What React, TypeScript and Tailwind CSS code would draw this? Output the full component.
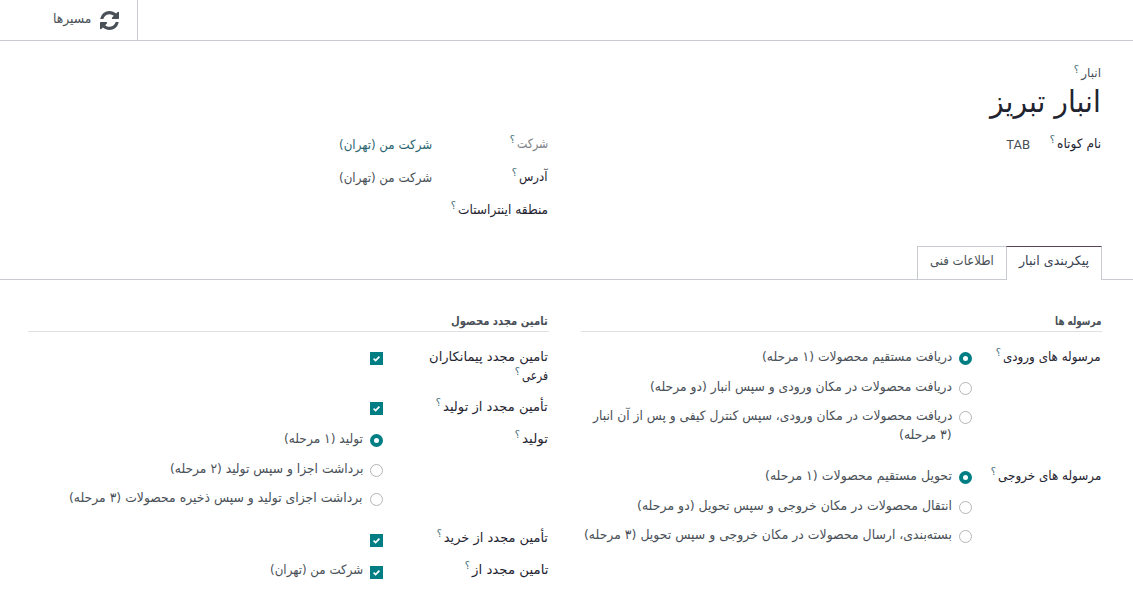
import React, { useLayoutEffect, useRef, useState } from 'react';
import clsx from 'clsx';

interface FitProps {
  w: number;
  children: string;
  className?: string;
}

// Keeps a single line of text at a given width, whatever font gets picked
const Fit = ({ w, children, className }: FitProps) => {
  const ref = useRef<HTMLSpanElement>(null);
  const [scale, setScale] = useState(1);

  useLayoutEffect(() => {
    if (ref.current) {
      setScale(w / ref.current.offsetWidth);
    }
  }, [w, children]);

  return (
    <span className={clsx('flex shrink-0 whitespace-nowrap', className)} style={{ width: w }}>
      <span ref={ref} className="block shrink-0 origin-right" style={{ transform: `scaleX(${scale})` }}>
        {children}
      </span>
    </span>
  );
};

const Help = () => (
  <span className="ms-[2px] -mt-[4px] text-[10px] text-[#3f6f78]">؟</span>
);

interface LabelProps {
  w: number;
  text: string;
  className?: string;
  help?: boolean;
}

const Label = ({ w, text, className = 'text-[#1f2430]', help = true }: LabelProps) => (
  <div className={clsx('flex h-[19px] ps-px leading-[19px]', className)}>
    <Fit w={w}>{text}</Fit>
    {help && <Help />}
  </div>
);

const Radio = ({ checked }: { checked?: boolean }) => (
  <span
    className={clsx(
      'mt-[5px] size-[13px] shrink-0 rounded-full bg-white',
      checked ? 'border-4 border-[#017e84]' : 'border border-[#b4b5b8]'
    )}
  />
);

const Checkbox = () => (
  <span className="flex size-[13px] shrink-0 items-center justify-center bg-[#017e84]">
    <svg viewBox="0 0 13 13" className="size-[13px]" fill="none" stroke="white" strokeWidth="1.7">
      <path d="M3.6 6.6 5.6 8.5 9.4 4.6" />
    </svg>
  </span>
);

interface Option {
  lines: [string, number][];
  checked?: boolean;
  className: string;
}

const RadioGroup = ({ options }: { options: Option[] }) => (
  <div>
    {options.map((option) => (
      <div key={option.lines[0][0]} className={clsx('flex gap-[7px]', option.className)}>
        <Radio checked={option.checked} />
        <div className="leading-[19px] text-[#495057]">
          {option.lines.map(([text, w]) => (
            <Fit key={text} w={w}>{text}</Fit>
          ))}
        </div>
      </div>
    ))}
  </div>
);

const incoming: Option[] = [
  { lines: [['دریافت مستقیم محصولات (۱ مرحله)', 190]], checked: true, className: 'h-[30px]' },
  { lines: [['دریافت محصولات در مکان ورودی و سپس انبار (دو مرحله)', 302]], className: 'h-[29px]' },
  {
    lines: [
      ['دریافت محصولات در مکان ورودی، سپس کنترل کیفی و پس از آن انبار', 359],
      ['(۳ مرحله)', 53],
    ],
    className: 'h-[60px]',
  },
];

const outgoing: Option[] = [
  { lines: [['تحویل مستقیم محصولات (۱ مرحله)', 187]], checked: true, className: 'h-[30px]' },
  { lines: [['انتقال محصولات در مکان خروجی و سپس تحویل (دو مرحله)', 315]], className: 'h-[29px]' },
  { lines: [['بسته‌بندی، ارسال محصولات در مکان خروجی و سپس تحویل (۳ مرحله)', 368]], className: 'h-[30px]' },
];

const manufacture: Option[] = [
  { lines: [['تولید (۱ مرحله)', 79]], checked: true, className: 'h-[30px]' },
  { lines: [['برداشت اجزا و سپس تولید (۲ مرحله)', 193]], className: 'h-[29px]' },
  { lines: [['برداشت اجزای تولید و سپس ذخیره محصولات (۳ مرحله)', 294]], className: 'h-[40px]' },
];

const App = () => {
  return (
    <div
      dir="rtl"
      className="h-[614px] w-[1133px] overflow-hidden bg-white font-['DejaVu_Sans',sans-serif] text-[13px] text-[#495057]"
    >
      <header className="flex h-[41px] justify-end border-b border-[#c9cbd2]">
        <button className="flex w-[138px] gap-[9px] border-r border-[#c9cbd2] ps-[18px]">
          <svg viewBox="0 0 1536 1536" className="mt-[11px] size-[19px]" fill="#495057">
            <path d="M1511 928q0 5-1 7-64 268-268 434.500t-478 166.500q-146 0-282.500-55t-243.500-157l-129 129q-19 19-45 19t-45-19-19-45v-448q0-26 19-45t45-19h448q26 0 45 19t19 45-19 45l-137 137q71 66 161 102t187 36q134 0 250-65t186-179q11-17 53-117 8-23 30-23h192q13 0 22.500 9.500t9.500 22.500zm25-800v448q0 26-19 45t-45 19h-448q-26 0-45-19t-19-45 19-45l138-138q-148-137-349-137-134 0-250 65t-186 179q-11 17-53 117-8 23-30 23h-199q-13 0-22.500-9.500t-9.500-22.500v-7q65-268 270-434.500t480-166.500q146 0 284 55.500t245 156.500l130-129q19-19 45-19t45 19 19 45z" />
          </svg>
          <Fit w={38} className="mt-[9px] leading-[19px]">مسیرها</Fit>
        </button>
      </header>

      <section className="h-[205px] ps-[31px] pe-8 pt-[23px]">
        <Label w={20} text="انبار" className="text-[12px] text-[#495057]" />
        <h1 className="h-[51px] ps-px text-[30px] leading-[38px] text-[#1f2430]">
          <Fit w={111}>انبار تبریز</Fit>
        </h1>
        <div className="grid grid-cols-[521px_521px] gap-x-8">
          <div className="flex">
            <div className="w-[72px]">
              <Label w={44} text="نام کوتاه" />
            </div>
            <span className="font-['Roboto',sans-serif] text-[13px] leading-[21px]">TAB</span>
          </div>
          <div className="grid grid-cols-[117px_1fr] auto-rows-[33px] leading-[19px]">
            <Label w={31} text="شرکت" className="text-[#7c8088]" />
            <Fit w={93} className="mt-px text-[#2b6670]">شرکت من (تهران)</Fit>
            <Label w={29} text="آدرس" />
            <Fit w={93} className="mt-px">شرکت من (تهران)</Fit>
            <Label w={90} text="منطقه اینتراستات" />
          </div>
        </div>
      </section>

      <nav className="flex h-[34px] border-b border-[#c9cbd2] ps-[31px]">
        <button className="flex h-[34px] w-[96px] justify-center border-x border-t border-x-[#c9cbd2] border-t-[#5d4359] bg-white pt-[4px] leading-[19px] text-[#374151]">
          <Fit w={70}>پیکربندی انبار</Fit>
        </button>
        <button className="flex w-[89px] justify-center border-l border-t border-[#c9cbd2] pt-[4px] leading-[19px]">
          <Fit w={64}>اطلاعات فنی</Fit>
        </button>
      </nav>

      <section className="grid grid-cols-[521px_521px] gap-x-8 ps-[31px] pt-[31px]">
        <div>
          <h2 className="mb-[15px] h-[21px] border-b border-[#dfe0e4] ps-px text-[11.5px] font-bold leading-[21px] text-[#495057]">
            <Fit w={46}>مرسوله ها</Fit>
          </h2>
          <div className="grid grid-cols-[130px_1fr]">
            <Label w={98} text="مرسوله های ورودی" />
            <RadioGroup options={incoming} />
            <Label w={103} text="مرسوله های خروجی" />
            <RadioGroup options={outgoing} />
          </div>
        </div>

        <div>
          <h2 className="mb-[15px] h-[21px] border-b border-[#dfe0e4] ps-px text-[11.5px] font-bold leading-[21px] text-[#495057]">
            <Fit w={97}>تامین مجدد محصول</Fit>
          </h2>
          <div className="grid grid-cols-[166px_1fr]">
            <div className="h-[50px]">
              <Label w={119} text="تامین مجدد پیمانکاران" help={false} />
              <Label w={26} text="فرعی" />
            </div>
            <div className="pt-[5px]"><Checkbox /></div>
            <div className="h-[32px]">
              <Label w={105} text="تأمین مجدد از تولید" />
            </div>
            <div className="pt-[5px]"><Checkbox /></div>
            <Label w={26} text="تولید" />
            <RadioGroup options={manufacture} />
            <div className="h-[32px]">
              <Label w={104} text="تأمین مجدد از خرید" />
            </div>
            <div className="pt-[6px]"><Checkbox /></div>
            <Label w={76} text="تامین مجدد از" />
            <div className="flex gap-[7px]">
              <div className="pt-[6px]"><Checkbox /></div>
              <Fit w={93} className="leading-[19px]">شرکت من (تهران)</Fit>
            </div>
          </div>
        </div>
      </section>
    </div>
  );
};

export default App;
